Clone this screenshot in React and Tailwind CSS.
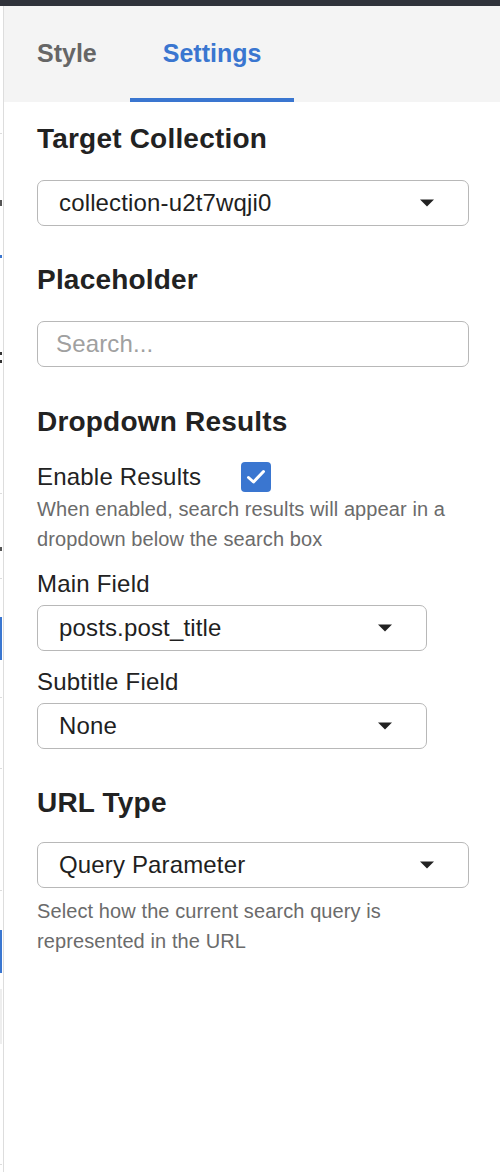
import React from "react";

// bits of the page behind the panel that peek out on the left edge
const edgeMarks = [
  { h: 127, c: "bg-white" },
  { h: 1, c: "bg-[#dddddd]" },
  { h: 66, c: "bg-white" },
  { h: 6, c: "bg-[#555555]" },
  { h: 49, c: "bg-white" },
  { h: 3, c: "bg-[#3a76d0]" },
  { h: 94, c: "bg-white" },
  { h: 3, c: "bg-[#333333]" },
  { h: 5, c: "bg-white" },
  { h: 3, c: "bg-[#333333]" },
  { h: 130, c: "bg-white" },
  { h: 1, c: "bg-[#dddddd]" },
  { h: 53, c: "bg-white" },
  { h: 4, c: "bg-[#555555]" },
  { h: 27, c: "bg-white" },
  { h: 1, c: "bg-[#dddddd]" },
  { h: 38, c: "bg-white" },
  { h: 43, c: "bg-[#3a76d0]" },
  { h: 37, c: "bg-white" },
  { h: 1, c: "bg-[#dddddd]" },
  { h: 70, c: "bg-white" },
  { h: 1, c: "bg-[#dddddd]" },
  { h: 121, c: "bg-white" },
  { h: 1, c: "bg-[#dddddd]" },
  { h: 39, c: "bg-white" },
  { h: 43, c: "bg-[#3a76d0]" },
  { h: 16, c: "bg-white" },
  { h: 55, c: "bg-[#eeeeee]" },
  { h: 120, c: "bg-white" },
  { h: 1, c: "bg-[#dddddd]" },
];

const Caret = () => (
  <svg width="16" height="8" viewBox="0 0 16 8" className="shrink-0">
    <path d="M1 0.5 L15 0.5 L8 7.5 Z" fill="#222222" />
  </svg>
);

const Select = ({ value, wide = true }) => (
  <div
    className={`flex items-center justify-between h-[46px] pl-[21px] pr-[33px] border border-[#b8b8b8] rounded-[7px] bg-white ${
      wide ? "w-[432px]" : "w-[390px]"
    }`}
  >
    <span className="text-[24px] leading-[30px] tracking-[0.15px] text-[#1f1f1f]">{value}</span>
    <Caret />
  </div>
);

const Heading = ({ children }) => (
  <h2 className="text-[28px] leading-[32px] font-bold tracking-[0.2px] text-[#222222]">{children}</h2>
);

const Help = ({ children }) => (
  <p className="text-[20px] leading-[30px] text-[#6b6b6b] tracking-[0.1px]">{children}</p>
);

export default function App() {
  return (
    <div className="w-[500px] h-[1172px] flex flex-col bg-white overflow-hidden font-['Liberation_Sans',Arial,sans-serif]">
      <div className="h-[6px] bg-[#30333b] shrink-0" />
      <div className="flex flex-1">
        <div className="w-[3px] flex flex-col">
          {edgeMarks.map((m, i) => (
            <div key={i} className={`w-[2px] ${m.c}`} style={{ height: m.h }} />
          ))}
        </div>
        <div className="flex-1 flex flex-col border-l border-[#dddddd]">
          {/* tabs */}
          <div className="flex h-[96px] bg-[#f4f4f4] shrink-0">
            <div className="flex items-center px-[33px] text-[25px] font-bold text-[#666666]">Style</div>
            <div className="flex items-center px-[33px] text-[25px] font-bold text-[#3a76d0] border-b-4 border-[#3a76d0] pt-[4px]">
              Settings
            </div>
          </div>

          <div className="flex flex-col pl-[33px] pt-[21px]">
            <Heading>Target Collection</Heading>
            <div className="mt-[25px]">
              <Select value="collection-u2t7wqji0" />
            </div>

            <div className="mt-[38px]">
              <Heading>Placeholder</Heading>
            </div>
            <div className="mt-[25px] w-[432px] h-[46px] flex items-center pl-[18px] border border-[#b8b8b8] rounded-[7px]">
              <span className="text-[24px] leading-[30px] tracking-[0.15px] text-[#a0a0a0]">Search...</span>
            </div>

            <div className="mt-[39px]">
              <Heading>Dropdown Results</Heading>
            </div>
            <div className="mt-[24px] flex items-center h-[30px]">
              <span className="text-[24px] leading-[30px] tracking-[0.2px] text-[#222222] w-[204px]">Enable Results</span>
              <div className="w-[30px] h-[30px] rounded-[4px] bg-[#3a76d0] flex items-center justify-center">
                <svg width="20" height="16" viewBox="0 0 20 16">
                  <path d="M2.5 8.5 L7.5 13 L17.5 2.5" fill="none" stroke="#ffffff" strokeWidth="3" strokeLinecap="round" strokeLinejoin="round" />
                </svg>
              </div>
            </div>
            <div className="mt-[2px]">
              <Help>
                When enabled, search results will appear in a
                <br />
                dropdown below the search box
              </Help>
            </div>

            <div className="mt-[15px] text-[24px] leading-[30px] tracking-[0.2px] text-[#222222]">Main Field</div>
            <div className="mt-[6px]">
              <Select value="posts.post_title" wide={false} />
            </div>

            <div className="mt-[16px] text-[24px] leading-[30px] tracking-[0.2px] text-[#222222]">Subtitle Field</div>
            <div className="mt-[6px]">
              <Select value="None" wide={false} />
            </div>

            <div className="mt-[38px]">
              <Heading>URL Type</Heading>
            </div>
            <div className="mt-[23px]">
              <Select value="Query Parameter" />
            </div>
            <div className="mt-[8px]">
              <Help>
                Select how the current search query is
                <br />
                represented in the URL
              </Help>
            </div>
          </div>
        </div>
      </div>
    </div>
  );
}
